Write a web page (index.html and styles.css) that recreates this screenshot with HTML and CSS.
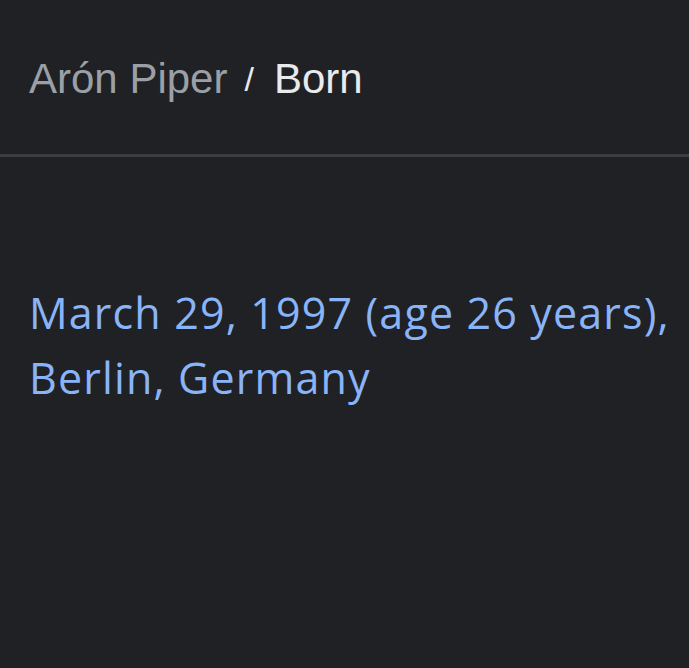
FILE: index.html
```html
<!DOCTYPE html>
<html>
<head>
<meta charset="utf-8">
<link rel="stylesheet" href="styles.css">
</head>
<body>
<div class="page">
  <header class="crumbs">
    <span class="crumb-parent">Arón Piper</span>
    <span class="crumb-sep">/</span>
    <span class="crumb-current">Born</span>
  </header>
  <main class="content">
    <p class="answer">March 29, 1997 (age 26 years), Berlin, Germany</p>
  </main>
</div>
</body>
</html>
```
FILE: styles.css
```css
html, body {
  margin: 0;
  padding: 0;
  background: #202124;
}
.page {
  width: 689px;
  height: 668px;
  background: #202124;
  overflow: hidden;
}
.crumbs {
  height: 157px;
  box-sizing: border-box;
  border-bottom: 3px solid #3c3d40;
  padding: 4px 0 0 29px;
  display: flex;
  align-items: center;
  font-family: "Liberation Sans", Arial, sans-serif;
  font-size: 42px;
  line-height: 50px;
}
.crumb-parent {
  color: #9aa0a6;
}
.crumb-sep {
  color: #e8eaed;
  font-size: 34px;
  font-weight: 300;
  margin: 0 20px 0 17px;
}
.crumb-current {
  color: #e8eaed;
}
.content {
  padding: 123px 10px 0 29px;
}
.answer {
  margin: 0;
  color: #8ab4f8;
  font-family: "Open Sans", sans-serif;
  font-size: 43px;
  line-height: 65px;
  letter-spacing: 1.15px;
}
```
